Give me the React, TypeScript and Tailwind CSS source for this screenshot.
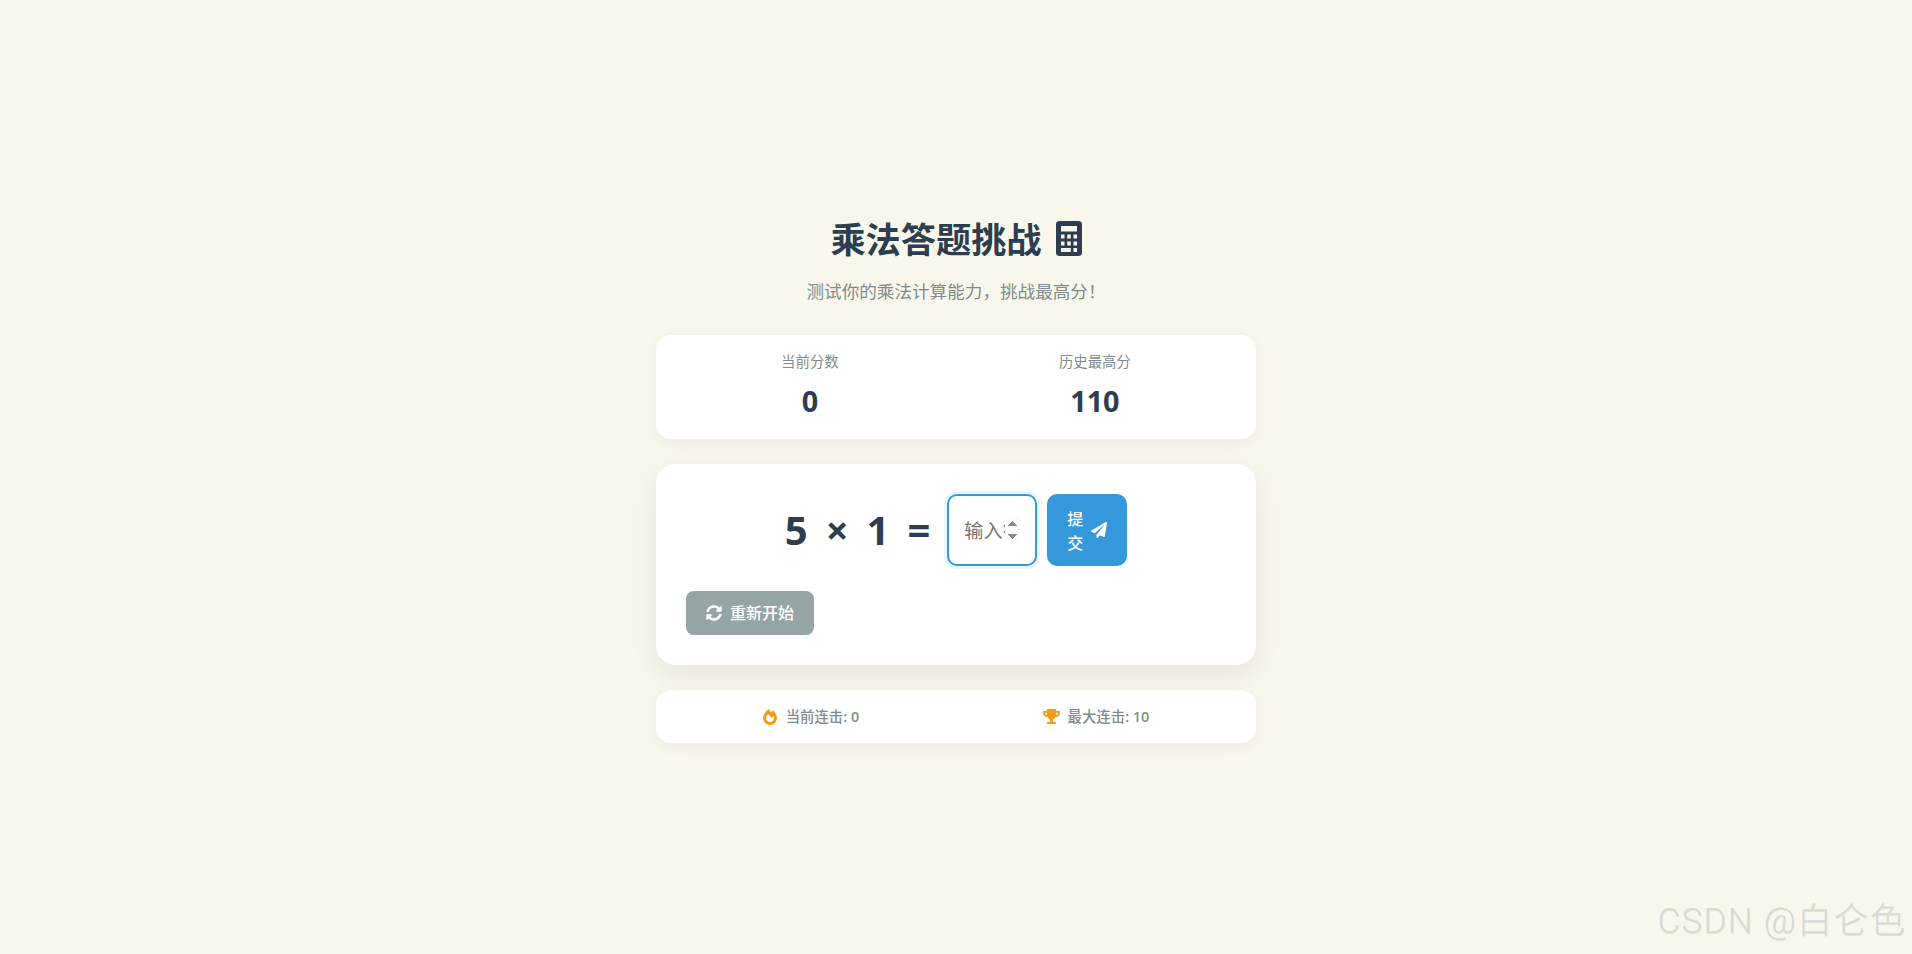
import { FaFireAlt, FaPaperPlane, FaSyncAlt, FaTrophy } from 'react-icons/fa';

const fontStack = 'font-["Open_Sans","Noto_Sans_CJK_SC",sans-serif]';

function CalculatorIcon() {
  return (
    <svg viewBox="0 0 26 35" className="w-[26px] h-[35px]" fill="#2c3e50">
      <path
        fillRule="evenodd"
        d="M3.500 0h19a3.500 3.500 0 0 1 3.500 3.500v28a3.500 3.500 0 0 1-3.500 3.500h-19a3.500 3.500 0 0 1-3.500-3.500v-28a3.500 3.500 0 0 1 3.500-3.500zM5 5v5.500h16v-5.500zM5 13.500v4h3.500v-4zM11.200 13.500v4h3.600v-4zM17.500 13.500v4h3.500v-4zM5 20.500v4h3.500v-4zM11.200 20.500v4h3.600v-4zM17.500 20.500v4h3.500v-4zM5 27v4h9.800v-4zM17.500 27v4h3.500v-4z"
      />
    </svg>
  );
}

export default function App() {
  return (
    <div className={`relative min-h-screen bg-[#f9f7ec] leading-[1.6] flex items-center justify-center ${fontStack}`}>
      <div className="w-[600px]">
        <div className="text-center mb-[30px]">
          <h1 className="text-[35.2px] font-bold text-[#2c3e50] flex items-center justify-center gap-[14px] mb-[10px]">
            乘法答题挑战
            <CalculatorIcon />
          </h1>
          <p className="text-[17.6px] text-[#7f8c8d]">测试你的乘法计算能力，挑战最高分！</p>
        </div>

        <div className="bg-white rounded-[15px] shadow-[0_4px_15px_rgba(0,0,0,0.05)] flex justify-around p-[15px] mb-[25px]">
          <div className="text-center">
            <div className="text-[14.4px] text-[#7f8c8d] mb-[5px]">当前分数</div>
            <div className="text-[28.8px] font-bold text-[#2c3e50]">0</div>
          </div>
          <div className="text-center">
            <div className="text-[14.4px] text-[#7f8c8d] mb-[5px]">历史最高分</div>
            <div className="text-[28.8px] font-bold text-[#2c3e50]">110</div>
          </div>
        </div>

        <div className="bg-white rounded-[20px] shadow-[0_10px_30px_rgba(0,0,0,0.08)] p-[30px] mb-[25px]">
          <div className="flex items-center justify-center gap-[10px] h-[72px]">
            <div className="flex items-center gap-[18px] text-[40px] font-bold text-[#2c3e50] mr-[7px]">
              <span>5</span>
              <span>×</span>
              <span>1</span>
              <span>=</span>
            </div>
            <input
              type="number"
              autoFocus
              placeholder="输入答案"
              className="w-[90px] h-[72px] border-2 border-[#3498db] rounded-[10px] px-[15px] text-[19.2px] text-[#2c3e50] placeholder:text-[#757575] outline-none shadow-[0_0_0_3px_rgba(52,152,219,0.1)]"
            />
            <button className="w-[80px] h-[72px] bg-[#3498db] text-white rounded-[10px] flex items-center px-[20px] gap-[8px] text-[16px] font-medium">
              <span className="w-[16px] leading-[24px] pt-[1px]">提交</span>
              <FaPaperPlane className="w-[16px] h-[16px] shrink-0" />
            </button>
          </div>
          <button className="mt-[25px] h-[44px] bg-[#95a5a6] text-white rounded-[8px] flex items-center px-[20px] gap-[8px] text-[16px] font-medium">
            <FaSyncAlt className="w-[16px] h-[16px]" />
            <span className="pt-[1px]">重新开始</span>
          </button>
        </div>

        <div className="bg-white rounded-[15px] shadow-[0_4px_15px_rgba(0,0,0,0.05)] flex justify-around p-[15px]">
          <div className="flex items-center gap-[9px] text-[14.4px] font-medium text-[#7f8c8d]">
            <FaFireAlt className="w-[14px] h-[16px] text-[#f39c12]" />
            <span>当前连击<span className="font-semibold">: 0</span></span>
          </div>
          <div className="flex items-center gap-[8px] text-[14.4px] font-medium text-[#7f8c8d]">
            <FaTrophy className="w-[17px] h-[15px] text-[#f39c12]" />
            <span>最大连击<span className="font-semibold">: 10</span></span>
          </div>
        </div>
      </div>

      <div className="absolute right-[6px] bottom-[12px] text-[35px] leading-[40px] font-light tracking-[1.3px] text-[#d8d8d8] [text-shadow:0.5px_0.5px_0_rgba(190,190,190,0.4)] font-['Roboto','Noto_Sans_CJK_SC',sans-serif]">
        CSDN @白仑色
      </div>
    </div>
  );
}
